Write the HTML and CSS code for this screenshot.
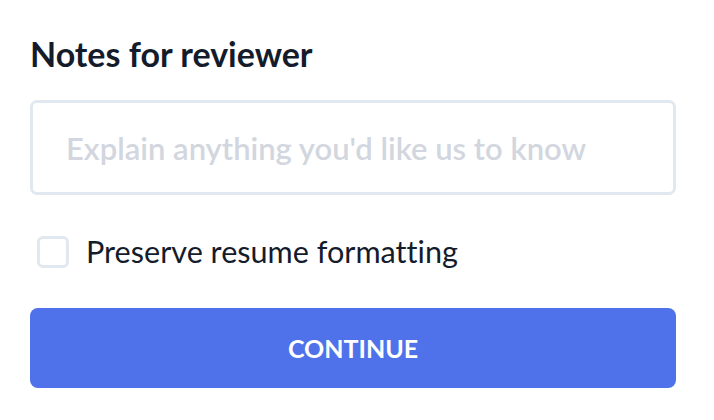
FILE: index.html
```html
<!DOCTYPE html>
<html lang="en">
<head>
    <meta charset="UTF-8">
    <meta name="viewport" content="width=device-width, initial-scale=1.0">
    <title>Notes for reviewer</title>
    <link rel="stylesheet" href="styles.css">
</head>
<body>
    <form class="review-form">
        <h2 class="form-title">Notes for reviewer</h2>
        <input type="text" class="notes-input" placeholder="Explain anything you'd like us to know">
        <label class="check-row">
            <span class="check-box"></span>
            <span class="check-label">Preserve resume formatting</span>
        </label>
        <button type="button" class="continue-btn">CONTINUE</button>
    </form>
</body>
</html>
```

FILE: styles.css
```css
* {
    margin: 0;
    padding: 0;
    box-sizing: border-box;
    font-family: Lato, 'Noto Sans', sans-serif;
    font-variant-ligatures: none;
}

body {
    background: #ffffff;
    color: #141c2c;
}

.review-form {
    display: flex;
    flex-direction: column;
    padding: 30px 38px 0 30px;
}

.form-title {
    font-size: 34px;
    font-weight: 700;
    line-height: 48px;
    color: #141c2c;
    margin-bottom: 22px;
}

.notes-input {
    height: 95px;
    border: 3px solid #e2e8f0;
    border-radius: 7px;
    padding: 0 33px;
    font-size: 31px;
    font-weight: 600;
    color: #141c2c;
    outline: none;
}

.notes-input::placeholder {
    color: #d2d6de;
}

.check-row {
    display: flex;
    align-items: center;
    gap: 17px;
    margin: 41px 0 40px 7px;
}

.check-box {
    width: 32px;
    height: 32px;
    border: 3px solid #e2e8f0;
    border-radius: 6px;
}

.check-label {
    font-size: 30.6px;
    line-height: 32px;
}

.continue-btn {
    height: 80px;
    border: none;
    border-radius: 8px;
    background: #4f72eb;
    color: #ffffff;
    font-size: 25px;
    font-weight: 700;
    cursor: pointer;
}
```
